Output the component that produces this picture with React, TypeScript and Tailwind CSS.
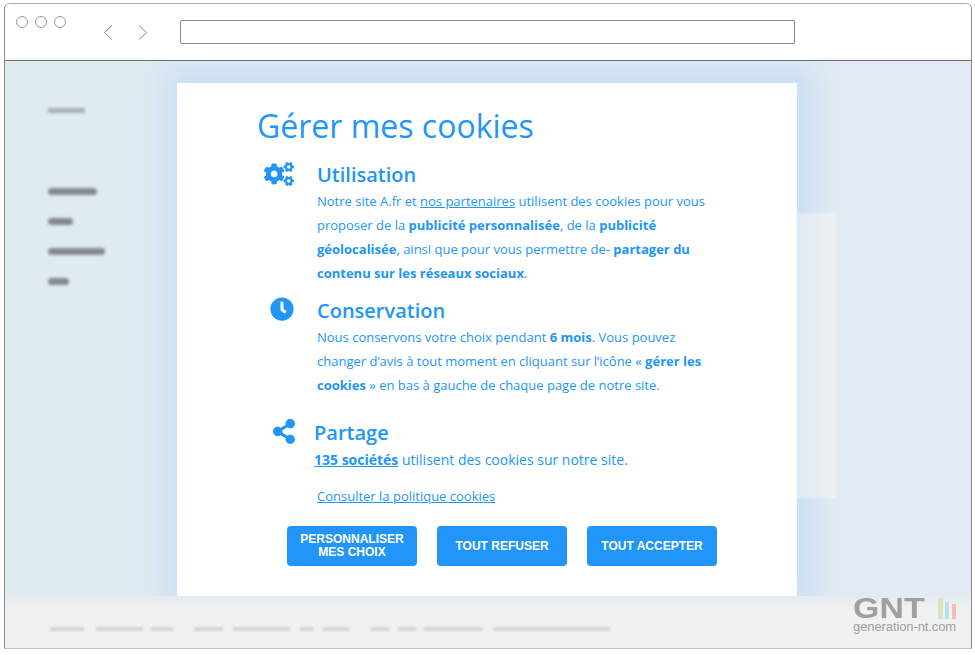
import { FaCogs, FaClock, FaShareAlt } from 'react-icons/fa';

const sidebarBars = ['w-[49px]', 'w-[25px]', 'w-[57px]', 'w-[21px]'];

// footer link placeholders, widths taken from the blurred strip
const footerBars = [
  'w-[34px] ml-0', 'w-[47px] ml-[12px]', 'w-[22px] ml-[8px]',
  'w-[29px] ml-[21px]', 'w-[57px] ml-[10px]', 'w-[13px] ml-[10px]', 'w-[26px] ml-[10px]',
  'w-[18px] ml-[22px]', 'w-[18px] ml-[9px]', 'w-[59px] ml-[8px]', 'w-[117px] ml-[10px]',
];

function Section({ icon, title, children, indent }: { icon: React.ReactNode; title: string; children: React.ReactNode; indent: string }) {
  return (
    <div className="flex">
      <div className={`${indent} shrink-0`}>{icon}</div>
      <div className="min-w-0">
        <h2 className="text-[20px] leading-[28px] font-semibold">{title}</h2>
        {children}
      </div>
    </div>
  );
}

export default function App() {
  return (
    <div className="w-[975px] h-[655px] bg-white pt-[3px] pl-[4px] overflow-hidden font-['Open_Sans',sans-serif]">
      <div className="relative w-[968px] h-[646px] flex flex-col rounded-t-[6px] border-x border-t border-x-[#8a8a8a] border-t-[#aaaaaa] border-b border-b-[#c4c4c4] overflow-hidden bg-white">
        {/* Browser chrome */}
        <div className="h-[57px] shrink-0 flex items-start border-b border-[#6f6f6f] bg-white">
          <div className="flex gap-[7px] ml-[11px] mt-[12px]">
            <span className="w-[12px] h-[12px] rounded-full border border-[#999999]" />
            <span className="w-[12px] h-[12px] rounded-full border border-[#999999]" />
            <span className="w-[12px] h-[12px] rounded-full border border-[#999999]" />
          </div>
          <svg className="ml-[37px] mt-[21px]" width="10" height="15" viewBox="0 0 10 15" fill="none" stroke="#8a8a8a" strokeWidth="1">
            <path d="M9 0.5 L1.5 7.5 L9 14.5" />
          </svg>
          <svg className="ml-[25px] mt-[21px]" width="10" height="15" viewBox="0 0 10 15" fill="none" stroke="#8a8a8a" strokeWidth="1">
            <path d="M1 0.5 L8.5 7.5 L1 14.5" />
          </svg>
          <div className="ml-[32px] mt-[16px] w-[615px] h-[24px] rounded-[2px] border border-[#8a8a8a] bg-white" />
        </div>

        {/* Page behind the dialog */}
        <div className="relative flex-1 flex flex-col bg-[#e2ebf3] overflow-hidden">
          <div className="flex-1 flex min-h-0">
            <aside className="w-[172px] shrink-0 pl-[43px] pt-[47px] bg-[#e0eaf1]">
              <div className="w-[37px] h-[5px] bg-[#a9afb3] blur-[1.5px]" />
              <div className="mt-[75px] flex flex-col gap-[23px]">
                {sidebarBars.map((w) => (
                  <div key={w} className={`${w} h-[7px] rounded-full bg-[#85898c] blur-[1.5px]`} />
                ))}
              </div>
            </aside>

            <div className="relative mt-[22px] w-[620px] shrink-0 h-[513px]">
              {/* blue glow and pale column sticking out from behind the dialog */}
              <div className="absolute -left-[10px] -right-[18px] -inset-y-[18px] bg-[#c9dff2] blur-[14px]" />
              <div className="absolute left-[618px] top-[130px] w-[41px] h-[285px] bg-gradient-to-r from-[#dde9f2] to-[#eff1f2] blur-[1px]" />

              <div className="relative h-full bg-white text-[#2196f8] text-[13px] leading-[24px] pl-[80px]">
                <h1 className="pt-[21px] text-[32px] leading-[44px]">Gérer mes cookies</h1>

                <div className="mt-[13px]">
                  <Section indent="w-[60px] pl-[7px] pt-[1px]" title="Utilisation" icon={<FaCogs className="w-[30px] h-[24px]" />}>
                    <p className="w-[400px]">
                      Notre site A.fr et <span className="underline">nos partenaires</span> utilisent des cookies pour vous proposer de la{' '}
                      <b>publicité personnalisée</b>, de la <b>publicité géolocalisée</b>, ainsi que pour vous permettre de- <b>partager du contenu sur les réseaux sociaux</b>.
                    </p>
                  </Section>
                </div>

                <div className="mt-[12px]">
                  <Section indent="w-[60px] pl-[13px]" title="Conservation" icon={<FaClock className="w-[24px] h-[24px]" />}>
                    <p className="w-[400px]">
                      Nous conservons votre choix pendant <b>6 mois</b>. Vous pouvez changer d’avis à tout moment en cliquant sur l’icône « <b>gérer les cookies</b> » en bas à gauche de chaque page de notre site.
                    </p>
                  </Section>
                </div>

                <div className="mt-[22px]">
                  <Section indent="w-[57px] pl-[15px]" title="Partage" icon={<FaShareAlt className="w-[24px] h-[25px]" />}>
                    <p className="text-[14px] mt-[1px]">
                      <a className="font-bold underline">135 sociétés</a> utilisent des cookies sur notre site.
                    </p>
                  </Section>
                </div>

                <p className="mt-[12px] ml-[60px]"><a className="underline">Consulter la politique cookies</a></p>

                <div className="mt-[18px] ml-[30px] flex gap-[20px] font-['Liberation_Sans',sans-serif] font-bold text-white text-[12px] leading-[13px] text-center">
                  <button className="w-[130px] h-[40px] rounded-[4px] bg-[#2196f8]">PERSONNALISER<br />MES CHOIX</button>
                  <button className="w-[130px] h-[40px] rounded-[4px] bg-[#2196f8]">TOUT REFUSER</button>
                  <button className="w-[130px] h-[40px] rounded-[4px] bg-[#2196f8]">TOUT ACCEPTER</button>
                </div>
              </div>
            </div>
          </div>

          {/* Footer strip */}
          <div className="relative h-[52px] shrink-0 flex items-center pl-[45px] pt-[14px] bg-[linear-gradient(#e2ebf1,#f0f1f1_12px)]">
            {footerBars.map((c) => (
              <div key={c} className={`${c} h-[4px] bg-[#d3d5d6] blur-[1px]`} />
            ))}
          </div>
        </div>

        {/* Watermark */}
        <div className="absolute right-[13px] bottom-[14px] w-[105px] text-[#a0a0a0] font-['Liberation_Sans',sans-serif]">
          <div className="flex items-end h-[22px]">
            <span className="text-[29px] leading-[21px] font-bold scale-x-[1.17] origin-left w-[85px]">GNT</span>
            <span className="w-[5px] h-[21px] bg-[#d6e4c0]" />
            <span className="ml-[2px] w-[4px] h-[17px] bg-[#bcdcf0]" />
            <span className="ml-[3px] w-[4px] h-[15px] bg-[#f5bdb2]" />
          </div>
          <div className="text-[13px] leading-[15px] tracking-[-0.1px]">generation-nt.com</div>
        </div>
      </div>
    </div>
  );
}
